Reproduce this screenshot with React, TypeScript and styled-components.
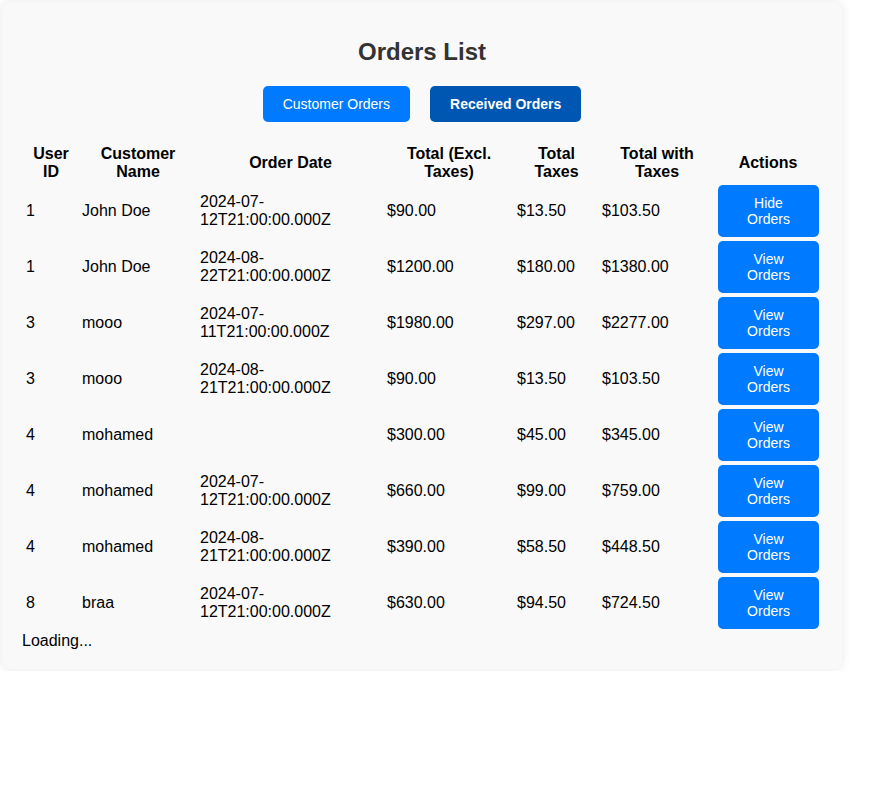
import React from "react";
import styled, { createGlobalStyle } from "styled-components";

const GlobalStyle = createGlobalStyle`
  *, *::before, *::after { box-sizing: border-box; }
  body {
    margin: 0;
    background: #ffffff;
    font-family: "Liberation Sans", Arial, sans-serif;
    color: #000;
  }
`;

const Page = styled.div`
  padding: 2px;
`;

const Card = styled.div`
  width: 840px;
  background: #f9f9f9;
  border-radius: 8px;
  box-shadow: 0 0 10px rgba(0, 0, 0, 0.1);
  padding: 20px 20px 19px;
`;

const Title = styled.h2`
  margin: 16px 0 20px;
  font-size: 24px;
  font-weight: bold;
  color: #333;
  text-align: center;
`;

const Toolbar = styled.div`
  display: flex;
  justify-content: center;
  gap: 20px;
  margin-bottom: 20px;
`;

const TabButton = styled.button<{ $active?: boolean }>`
  font-family: "Liberation Sans", Arial, sans-serif;
  font-size: 14px;
  line-height: 16px;
  padding: 10px 20px;
  border: none;
  border-radius: 5px;
  color: #fff;
  background: ${(p) => (p.$active ? "#0056b3" : "#007bff")};
  font-weight: ${(p) => (p.$active ? "bold" : "normal")};
  cursor: pointer;
`;

const Table = styled.table`
  width: 100%;
  table-layout: fixed;
  border-spacing: 2px;
`;

const Th = styled.th<{ $w: number }>`
  width: ${(p) => p.$w}px;
  padding: 1px;
  font-size: 16px;
  font-weight: bold;
  text-align: center;
  vertical-align: middle;
  line-height: 18px;
`;

const Td = styled.td`
  padding: 1px 1px 1px 2px;
  font-size: 16px;
  line-height: 18px;
  vertical-align: middle;
  text-align: left;
`;

const ActionCell = styled.td`
  padding: 1px 1px 1px 2px;
  vertical-align: middle;
`;

const ActionButton = styled.button`
  display: block;
  width: 100%;
  font-family: "Liberation Sans", Arial, sans-serif;
  font-size: 14px;
  line-height: 16px;
  padding: 10px 20px;
  border: none;
  border-radius: 5px;
  color: #fff;
  background: #007bff;
  cursor: pointer;
`;

const Status = styled.div`
  font-size: 16px;
  line-height: 18px;
`;

const columns = [
  { label: "User ID", w: 54 },
  { label: "Customer Name", w: 116 },
  { label: "Order Date", w: 185 },
  { label: "Total (Excl. Taxes)", w: 128 },
  { label: "Total Taxes", w: 83 },
  { label: "Total with Taxes", w: 114 },
  { label: "Actions", w: 104 },
];

const rows = [
  ["1", "John Doe", "2024-07-12T21:00:00.000Z", "$90.00", "$13.50", "$103.50", "Hide Orders"],
  ["1", "John Doe", "2024-08-22T21:00:00.000Z", "$1200.00", "$180.00", "$1380.00", "View Orders"],
  ["3", "mooo", "2024-07-11T21:00:00.000Z", "$1980.00", "$297.00", "$2277.00", "View Orders"],
  ["3", "mooo", "2024-08-21T21:00:00.000Z", "$90.00", "$13.50", "$103.50", "View Orders"],
  ["4", "mohamed", "", "$300.00", "$45.00", "$345.00", "View Orders"],
  ["4", "mohamed", "2024-07-12T21:00:00.000Z", "$660.00", "$99.00", "$759.00", "View Orders"],
  ["4", "mohamed", "2024-08-21T21:00:00.000Z", "$390.00", "$58.50", "$448.50", "View Orders"],
  ["8", "braa", "2024-07-12T21:00:00.000Z", "$630.00", "$94.50", "$724.50", "View Orders"],
];

export default function App() {
  return (
    <>
      <GlobalStyle />
      <Page>
        <Card>
          <Title>Orders List</Title>
          <Toolbar>
            <TabButton>Customer Orders</TabButton>
            <TabButton $active>Received Orders</TabButton>
          </Toolbar>
          <Table>
            <thead>
              <tr>
                {columns.map((c) => (
                  <Th key={c.label} $w={c.w}>
                    {c.label}
                  </Th>
                ))}
              </tr>
            </thead>
            <tbody>
              {rows.map((r, i) => (
                <tr key={i}>
                  {r.slice(0, 6).map((v, j) => (
                    <Td key={j}>{v}</Td>
                  ))}
                  <ActionCell>
                    <ActionButton>{r[6]}</ActionButton>
                  </ActionCell>
                </tr>
              ))}
            </tbody>
          </Table>
          <Status>Loading...</Status>
        </Card>
      </Page>
    </>
  );
}
